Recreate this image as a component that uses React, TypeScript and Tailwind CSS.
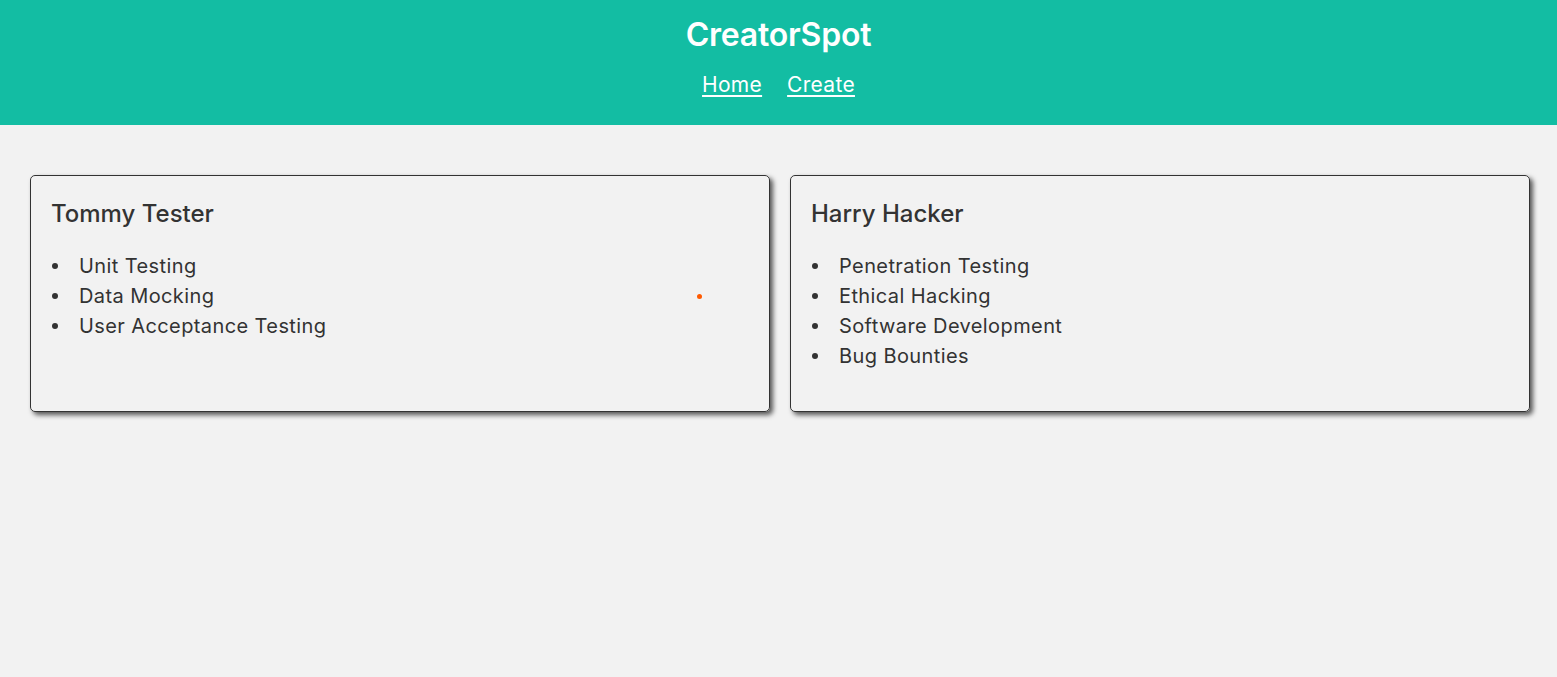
const creators = [
  {
    name: "Tommy Tester",
    skills: ["Unit Testing", "Data Mocking", "User Acceptance Testing"],
  },
  {
    name: "Harry Hacker",
    skills: [
      "Penetration Testing",
      "Ethical Hacking",
      "Software Development",
      "Bug Bounties",
    ],
  },
];

export default function App() {
  return (
    <div className="min-h-[677px] bg-[#f2f2f2] font-['Inter',sans-serif] text-[#333]">
      <header className="flex h-[125px] flex-col items-center bg-[#13bda3] pt-[14px] text-white">
        <h1 className="text-[32px] font-semibold leading-[42px] tracking-[-0.2px]">
          CreatorSpot
        </h1>
        <nav className="mt-[14px] flex gap-[25px] text-[21px] leading-[30px] tracking-[0.3px]">
          <a href="#" className="underline underline-offset-[3px]">
            Home
          </a>
          <a href="#" className="underline underline-offset-[3px]">
            Create
          </a>
        </nav>
      </header>
      <main className="grid grid-cols-2 gap-5 pl-[30px] pr-[27px] pt-[50px]">
        {creators.map((creator, i) => (
          <section
            key={creator.name}
            className="relative rounded-[5px] border border-[#333] p-5 shadow-[3px_3px_5px_rgba(0,0,0,0.65)]"
          >
            <h2 className="mb-[19px] text-[24px] font-medium leading-[36px]">
              {creator.name}
            </h2>
            <ul className="mb-5 text-[20px] leading-[30px] tracking-[0.4px]">
              {creator.skills.map((skill) => (
                <li key={skill} className="flex items-center">
                  <span className="ml-[1px] mr-[21px] h-[6px] w-[6px] rounded-full bg-[#333]" />
                  {skill}
                </li>
              ))}
            </ul>
            {i === 0 ? (
              <span className="absolute left-[666px] top-[118px] h-[5px] w-[5px] rounded-full bg-[#ff5a00]" />
            ) : null}
          </section>
        ))}
      </main>
    </div>
  );
}
